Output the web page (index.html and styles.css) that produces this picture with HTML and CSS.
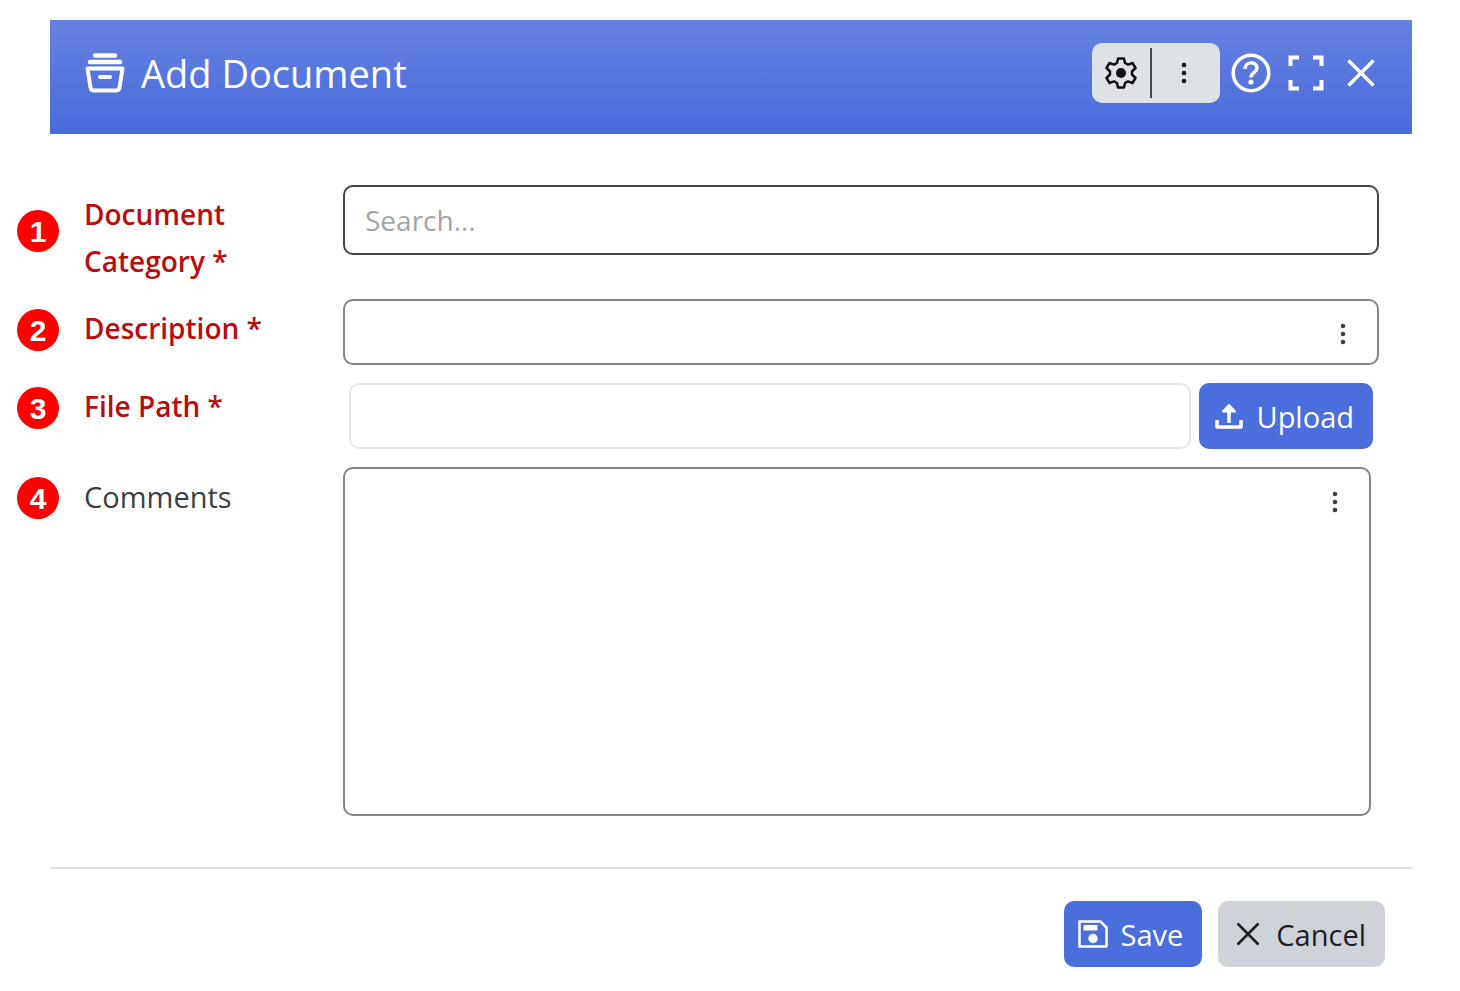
FILE: index.html
```html
<!DOCTYPE html>
<html lang="en">
<head>
    <meta charset="UTF-8">
    <meta name="viewport" content="width=device-width, initial-scale=1.0">
    <title>Add Document</title>
    <link rel="stylesheet" href="styles.css">
</head>
<body>
    <main class="dialog">
        <header class="dialog_header">
            <svg class="title_icon" viewBox="0 0 40 40" fill="none" stroke="currentColor" stroke-linecap="round" stroke-linejoin="round">
                <path d="M10 2.500h20M5 9h30" stroke-width="4.500"/>
                <path d="M2.500 15.500h35l-3 19q-.5 3-3.500 3H9q-3 0-3.500-3z" stroke-width="4"/>
                <path d="M15 24h10" stroke-width="4"/>
            </svg>
            <h1>Add Document</h1>
            <div class="tools">
                <button type="button" class="tool" aria-label="Settings">
                    <svg width="32" height="32" viewBox="0 0 32 32" fill="none" stroke="currentColor" stroke-width="2.500" stroke-linejoin="round">
                        <path d="M13 1.500h6l1 4.500 3 1.700 4.500-1.700 3 5-3.500 3.500v3l3.500 3.500-3 5-4.500-1.700-3 1.700-1 4.500h-6l-1-4.500-3-1.700-4.500 1.700-3-5L5 17.500v-3L1.500 11l3-5L9 7.700 12 6z"/>
                        <circle cx="16" cy="16" r="5" fill="currentColor" stroke="none"/>
                    </svg>
                </button>
                <button type="button" class="tool more" aria-label="More">
                    <svg width="6" height="22" viewBox="0 0 6 22" fill="currentColor"><circle cx="3" cy="3" r="2.300"/><circle cx="3" cy="11" r="2.300"/><circle cx="3" cy="19" r="2.300"/></svg>
                </button>
            </div>
            <div class="window_buttons">
                <button type="button" aria-label="Help">
                    <svg width="40" height="40" viewBox="0 0 40 40" fill="none" stroke="currentColor" stroke-width="3.500">
                        <circle cx="20" cy="20" r="17.800"/>
                        <path d="M14 16c0-8 12-8 12-1 0 4.500-6 4.500-6 9.500"/>
                        <circle cx="20" cy="29" r="2.600" fill="currentColor" stroke="none"/>
                    </svg>
                </button>
                <button type="button" aria-label="Full screen">
                    <svg width="36" height="36" viewBox="0 0 36 36" fill="none" stroke="currentColor" stroke-width="4">
                        <path d="M2.500 11V2.500H11M25 2.500h8.500V11M33.500 25v8.500H25M11 33.500H2.500V25"/>
                    </svg>
                </button>
                <button type="button" aria-label="Close">
                    <svg width="28" height="28" viewBox="0 0 28 28" fill="none" stroke="currentColor" stroke-width="3.500">
                        <path d="M1.500 1.500l25 25M26.500 1.500l-25 25"/>
                    </svg>
                </button>
            </div>
        </header>
        <form class="fields">
            <div class="row category">
                <span class="badge">1</span>
                <label class="required" for="category">Document Category *</label>
                <input type="text" id="category" class="search" placeholder="Search...">
            </div>
            <div class="row">
                <span class="badge">2</span>
                <label class="required" for="description">Description *</label>
                <div class="box">
                    <input type="text" id="description">
                    <button type="button" class="box_menu" aria-label="Description options">
                        <svg width="6" height="22" viewBox="0 0 6 22" fill="currentColor"><circle cx="3" cy="3" r="2.300"/><circle cx="3" cy="11" r="2.300"/><circle cx="3" cy="19" r="2.300"/></svg>
                    </button>
                </div>
            </div>
            <div class="row">
                <span class="badge">3</span>
                <label class="required" for="path">File Path *</label>
                <div class="file">
                    <input type="text" id="path" readonly>
                    <button type="button" class="btn upload">
                        <svg width="28" height="26" viewBox="0 0 28 26" fill="none" stroke="currentColor" stroke-width="3.500" stroke-linejoin="round">
                            <path d="M14 20V4M2 17v7h24v-7"/>
                            <path d="M14 2l6 6.500H8z" fill="currentColor" stroke-width="2"/>
                        </svg>
                        Upload
                    </button>
                </div>
            </div>
            <div class="row">
                <span class="badge">4</span>
                <label for="comments">Comments</label>
                <div class="box comments">
                    <textarea id="comments"></textarea>
                    <button type="button" class="box_menu" aria-label="Comments options">
                        <svg width="6" height="22" viewBox="0 0 6 22" fill="currentColor"><circle cx="3" cy="3" r="2.300"/><circle cx="3" cy="11" r="2.300"/><circle cx="3" cy="19" r="2.300"/></svg>
                    </button>
                </div>
            </div>
        </form>
        <footer class="dialog_footer">
            <button type="button" class="btn">
                <svg width="30" height="28" viewBox="0 0 30 28" fill="none" stroke="currentColor" stroke-width="2.500" stroke-linejoin="round">
                    <path d="M1.500 1.500h21l6 6v19h-27z"/>
                    <path d="M5.500 5h14v5.500h-14z" fill="currentColor" stroke="none"/>
                    <circle cx="15" cy="18.500" r="4.700" fill="currentColor" stroke="none"/>
                </svg>
                Save
            </button>
            <button type="button" class="btn cancel">
                <svg width="24" height="24" viewBox="0 0 24 24" fill="none" stroke="currentColor" stroke-width="2.500">
                    <path d="M1.500 1.500l21 21M22.500 1.500l-21 21"/>
                </svg>
                Cancel
            </button>
        </footer>
    </main>
</body>
</html>
```
FILE: styles.css
```css
* {
    box-sizing: border-box;
}
body {
    margin: 0;
    background-color: white;
    color: #3a3f44;
    font-family: "Open Sans", "Noto Sans", sans-serif;
    font-size: 29px;
}
button, input, textarea {
    font: inherit;
    color: inherit;
}
button {
    display: flex;
    align-items: center;
    justify-content: center;
    padding: 0;
    border: none;
    background: none;
    cursor: pointer;
}
svg {
    display: block;
    flex: none;
}
.dialog {
    margin: 20px 48px 0 50px;
}
.dialog_header {
    display: flex;
    align-items: center;
    height: 114px;
    padding: 0 37px 8px 35px;
    color: white;
    background: linear-gradient(#6682e0, #5474dd 60%, #4a6ddc);
}
.title_icon {
    width: 40px;
    height: 40px;
}
h1 {
    flex: 1;
    margin: 0 0 0 16px;
    font-size: 38px;
    font-weight: 400;
}
.tools {
    display: flex;
    align-items: center;
    height: 60px;
    border-radius: 10px;
    background-color: #dee1e6;
    color: #111;
}
.tool {
    width: 58px;
    height: 50px;
}
.more {
    width: 70px;
    padding-right: 4px;
    border-left: 2px solid #444;
}
.window_buttons {
    display: flex;
    align-items: center;
    margin-left: 11px;
}
.window_buttons button {
    margin-right: 17px;
}
.window_buttons button:nth-child(2) {
    margin-right: 23px;
}
.window_buttons button:last-child {
    margin-right: 0;
}

/* form */
.fields {
    display: flex;
    flex-direction: column;
    gap: 12px;
    padding: 51px 33px 51px 34px;
}
.row {
    position: relative;
    display: grid;
    grid-template-columns: 259px 1fr;
    align-items: start;
}
.badge {
    position: absolute;
    left: -67px;
    top: 10px;
    width: 42px;
    height: 42px;
    border-radius: 50%;
    background-color: red;
    color: white;
    font: bold 30px/44px "Liberation Sans", Arial, sans-serif;
    text-align: center;
}
.category .badge {
    top: 25px;
}
label {
    padding: 6px 100px 2px 0;
    line-height: 47px;
    white-space: nowrap;
}
.category label {
    white-space: normal;
}
.required {
    color: #b90c0c;
    font-size: 28px;
    font-weight: 600;
}
input, textarea {
    display: block;
    width: 100%;
    height: 66px;
    padding: 0 20px;
    border: 2px solid #858585;
    border-radius: 10px;
    background-color: white;
    outline: none;
}
.search {
    height: 70px;
    border-color: #3f454b;
    font-size: 28px;
}
.search::placeholder {
    color: #a5a5a5;
}
.box {
    position: relative;
}
.box_menu {
    position: absolute;
    top: 14px;
    right: 22px;
    width: 28px;
    height: 42px;
}
.comments {
    margin-right: 8px;
}
.comments textarea {
    height: 349px;
    padding: 12px 60px 12px 20px;
    resize: none;
}
.file {
    display: flex;
    gap: 8px;
    padding: 6px;
}
.file input {
    flex: 1;
    min-width: 0;
    border-color: #e4e7eb;
}

/* buttons */
.btn {
    gap: 13px;
    height: 66px;
    padding: 0 19px 0 14px;
    border-radius: 10px;
    background-color: #4a6edc;
    color: white;
}
.upload {
    padding-left: 16px;
}
.cancel {
    gap: 16px;
    padding-left: 18px;
    background-color: #ced3da;
    color: #1c1e22;
}
.dialog_footer {
    display: flex;
    justify-content: flex-end;
    gap: 16px;
    padding: 32px 27px 23px;
    border-top: 2px solid #dee2e6;
}
```
